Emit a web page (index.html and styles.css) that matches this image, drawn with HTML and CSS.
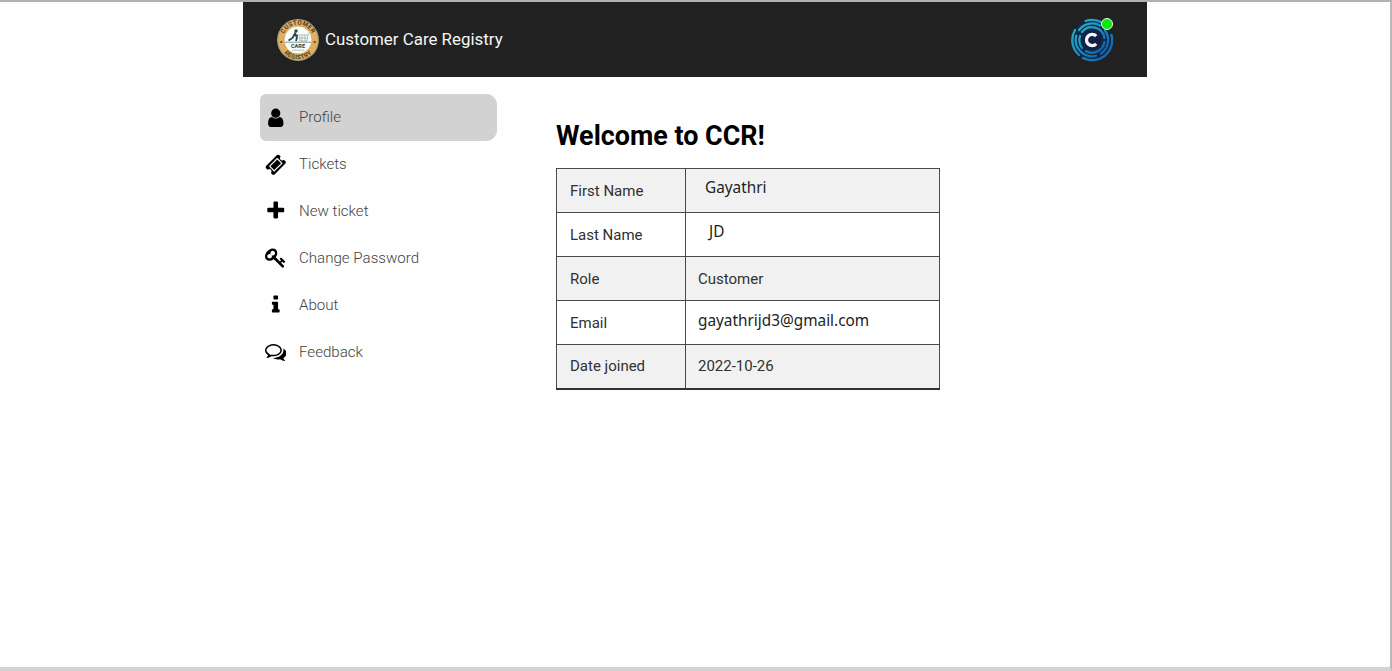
FILE: index.html
```html
<!DOCTYPE html>
<html lang="en">
<head>
<meta charset="utf-8">
<title>Customer Care Registry</title>
<link rel="stylesheet" href="styles.css">
</head>
<body>
<div class="app">
  <header class="topbar">
    <div class="brand">
      <svg class="logo" viewBox="0 0 42 42">
        <defs>
          <path id="arc-top" d="M5.6 21a15.4 15.4 0 0 1 30.8 0"/>
          <path id="arc-bottom" d="M1.7 21a19.3 19.3 0 0 0 38.6 0"/>
        </defs>
        <circle cx="21" cy="21" r="20.3" fill="#e3ae5c" stroke="#a9a184" stroke-width="1.2"/>
        <circle cx="21" cy="21" r="14" fill="#fbfcf8" stroke="#b69a60" stroke-width=".7"/>
        <text class="seal"><textPath href="#arc-top" startOffset="50%" text-anchor="middle">CUSTOMER</textPath></text>
        <text class="seal"><textPath href="#arc-bottom" startOffset="50%" text-anchor="middle">REGISTRY</textPath></text>
        <circle cx="4.3" cy="23" r="1.1" fill="#4b4024"/>
        <circle cx="37.7" cy="23" r="1.1" fill="#4b4024"/>
        <circle cx="19" cy="12" r="1.7" fill="#23474c"/>
        <path d="M18.5 13.5l-3 5.5M18 15l2 3.5-1 3.5M15.5 19l-4 2.5M17 15.5l4 1" fill="none" stroke="#23474c" stroke-width="1.8"/>
        <path d="M22 16h9l-1 6h-7zM25 16v6M28 16v6M31 16l1-2M22 19h8" fill="none" stroke="#9cb0a8" stroke-width=".8"/>
        <path d="M8 23.2h26" stroke="#55706d" stroke-width=".7"/>
        <text class="care" x="21" y="28.8" text-anchor="middle">CARE</text>
        <path d="M15 31.2h12" stroke="#a5b5af" stroke-width=".8"/>
      </svg>
      <span class="brand-name">Customer Care Registry</span>
    </div>
    <div class="avatar">
      <svg class="avatar-art" viewBox="0 0 44 44">
        <defs>
          <linearGradient id="ring" x1="0" y1="0" x2="1" y2="1">
            <stop offset="0" stop-color="#25b9c9"/>
            <stop offset="1" stop-color="#1558a8"/>
          </linearGradient>
        </defs>
        <circle cx="22" cy="22" r="20" fill="#10294b"/>
        <g fill="none" stroke="url(#ring)" stroke-linecap="round">
          <path d="M15.5 3A20 20 0 0 1 37 9M41.5 17A20 20 0 0 1 13 40M9 37A20 20 0 0 1 5 12" stroke-width="2.3"/>
          <path d="M9 12A16.3 16.3 0 0 1 30 7.5M35 12.5A16.3 16.3 0 0 1 31 35.6M26 37.7A16.3 16.3 0 0 1 6.3 17.5" stroke-width="2.2"/>
          <path d="M12 14A12.7 12.7 0 0 1 34.5 20M34.5 24A12.7 12.7 0 0 1 16 33.2M12 29.8A12.7 12.7 0 0 1 10 18" stroke-width="2.2"/>
        </g>
        <circle cx="22" cy="22" r="9.6" fill="#141f46"/>
        <path d="M26.2 18.2A5.6 5.6 0 1 0 26.2 25.8" fill="none" stroke="#f1f5fb" stroke-width="3.3"/>
      </svg>
      <span class="status"></span>
    </div>
  </header>
  <div class="body">
    <nav class="menu">
      <a class="item active"><svg class="icon" viewBox="0 0 1792 1792"><path d="M1536 1399q0 109-62.5 187t-150.5 78h-854q-88 0-150.5-78t-62.5-187q0-85 8.5-160.5t31.5-152 58.5-131 94-89 134.5-34.5q131 128 313 128t313-128q76 0 134.5 34.5t94 89 58.5 131 31.5 152 8.5 160.5zm-256-887q0 159-112.5 271.5t-271.5 112.5-271.5-112.5-112.5-271.5 112.5-271.5 271.5-112.5 271.5 112.5 112.5 271.5z"/></svg>Profile</a>
      <a class="item"><svg class="icon" viewBox="0 0 1792 1792"><path d="M1024 452l316 316-572 572-316-316zm-211 979l618-618q19-19 19-45t-19-45l-362-362q-18-18-45-18t-45 18l-618 618q-19 19-19 45t19 45l362 362q18 18 45 18t45-18zm889-637l-907 908q-37 37-90.5 37t-90.5-37l-126-126q56-56 56-136t-56-136-136-56-136 56l-125-126q-37-37-37-90.5t37-90.5l907-906q37-37 90.5-37t90.5 37l125 125q-56 56-56 136t56 136 136 56 136-56l126 125q37 37 37 90.5t-37 90.5z"/></svg>Tickets</a>
      <a class="item"><svg class="icon" viewBox="0 0 1792 1792"><path d="M1600 736v192q0 40-28 68t-68 28h-416v416q0 40-28 68t-68 28h-192q-40 0-68-28t-28-68v-416h-416q-40 0-68-28t-28-68v-192q0-40 28-68t68-28h416v-416q0-40 28-68t68-28h192q40 0 68 28t28 68v416h416q40 0 68 28t28 68z"/></svg>New ticket</a>
      <a class="item"><svg class="icon" viewBox="0 0 1792 1792"><path d="M832 512q0-80-56-136t-136-56-136 56-56 136q0 42 19 83-41-19-83-19-80 0-136 56t-56 136 56 136 136 56 136-56 56-136q0-42-19-83 41 19 83 19 80 0 136-56t56-136zm851 704q0 17-49 66t-66 49q-9 0-28.5-16t-36.5-33-38.5-40-24.5-26l-96 96 220 220q28 28 28 68 0 42-39 81t-81 39q-40 0-68-28l-671-671q-176 131-365 131-163 0-265.5-102.5t-102.5-265.5q0-160 95-313t248-248 313-95q163 0 265.5 102.5t102.5 265.5q0 189-131 365l355 355 96-96q-3-3-26-24.5t-40-38.5-33-36.5-16-28.5q0-17 49-66t66-49q13 0 23 10 6 6 46 44.5t82 79.5 86.5 86 73 78 28.5 41z"/></svg>Change Password</a>
      <a class="item"><svg class="icon" viewBox="0 0 1792 1792"><path d="M1216 1344v128q0 26-19 45t-45 19h-512q-26 0-45-19t-19-45v-128q0-26 19-45t45-19h64v-384h-64q-26 0-45-19t-19-45v-128q0-26 19-45t45-19h384q26 0 45 19t19 45v576h64q26 0 45 19t19 45zm-128-1152v192q0 26-19 45t-45 19h-256q-26 0-45-19t-19-45v-192q0-26 19-45t45-19h256q26 0 45 19t19 45z"/></svg>About</a>
      <a class="item"><svg class="icon" viewBox="0 0 1792 1792"><path d="M704 384q-153 0-286 52t-211.5 141-78.5 191q0 82 53 158t149 132l97 56-35 84q34-20 62-39l44-31 53 10q78 14 153 14 153 0 286-52t211.5-141 78.5-191-78.5-191-211.5-141-286-52zm0-128q191 0 353.5 68.5t256.5 186.5 94 257-94 257-256.5 186.5-353.5 68.5q-86 0-176-16-124 88-278 128-36 9-86 16h-3q-11 0-20.5-8t-11.5-21q-1-3-1-6.5t.5-6.5 2-6l2.5-5 3.5-5.5 4-5 4.5-5 4-4.5q5-6 23-25t26-29.5 22.5-29 25-38.5 20.5-44q-124-72-195-177t-71-224q0-139 94-257t256.5-186.5 353.5-68.5zm822 1169q10 24 20.5 44t25 38.5 22.5 29 26 29.5 23 25q1 1 4 4.5t4.5 5 4 5 3.5 5.5l2.5 5 2 6 .5 6.5-1 6.5q-3 14-13 22t-22 7q-50-7-86-16-154-40-278-128-90 16-176 16-271 0-472-132 58 4 88 4 161 0 309-45t264-129q125-92 192-212t67-254q0-77-23-152 129 71 204 178t75 230q0 120-71 224.5t-195 176.5z"/></svg>Feedback</a>
    </nav>
    <main class="profile">
      <h1 class="title">Welcome to CCR!</h1>
      <table class="details">
        <tr><td class="label">First Name</td><td class="edited first">Gayathri</td></tr>
        <tr><td class="label">Last Name</td><td class="edited last">JD</td></tr>
        <tr><td class="label">Role</td><td>Customer</td></tr>
        <tr><td class="label">Email</td><td class="edited email">gayathrijd3@gmail.com</td></tr>
        <tr><td class="label">Date joined</td><td>2022-10-26</td></tr>
      </table>
    </main>
  </div>
</div>
</body>
</html>
```
FILE: styles.css
```css
* { box-sizing: border-box; }
body {
  margin: 0;
  height: 671px;
  overflow: hidden;
  background: #fefefe;
  border-top: 2px solid #b0b0b0;
  border-right: 2px solid #b8b8b8;
  border-bottom: 4px solid #d2d2d2;
  font-family: Roboto, sans-serif;
}
.app { width: 904px; margin-left: 243px; }
.topbar {
  height: 75px;
  background: #212121;
  display: flex;
  align-items: center;
  justify-content: space-between;
  padding: 0 33px 0 34px;
}
.brand { display: flex; align-items: center; gap: 6px; }
.logo { width: 42px; height: 42px; }
.seal { font: bold 6.2px Roboto, sans-serif; fill: #4b4024; letter-spacing: .3px; }
.care { font: bold 5.6px Roboto, sans-serif; fill: #23474c; }
.brand-name { color: #f5f5f5; font-size: 16.9px; padding-bottom: 1px; }
.avatar { position: relative; width: 44px; height: 44px; }
.avatar-art { display: block; width: 44px; height: 44px; }
.status {
  position: absolute;
  right: 1px;
  top: 0;
  width: 12px;
  height: 12px;
  border-radius: 50%;
  background: #0be80b;
  border: 1px solid #e4ffe4;
}
.body { display: flex; padding: 17px 0 0 17px; }
.menu { width: 237px; }
.item {
  display: flex;
  align-items: center;
  gap: 13px;
  height: 46.9px;
  padding-left: 4.5px;
  border-radius: 6px 11px 11px 6px;
  color: #444;
  font-size: 15.1px;
  font-weight: 300;
}
.active { background: #d2d2d2; }
.icon { width: 21.5px; height: 21.5px; fill: #000; }
.profile { margin-left: 59px; padding-top: 26px; }
.title { margin: 0 0 16px; font-size: 26.9px; line-height: 32px; font-weight: 700; color: #000; white-space: nowrap; }
.details { width: 384px; table-layout: fixed; border-collapse: collapse; border-bottom: 2px solid #333; }
.details td {
  height: 44px;
  padding: 0 12px;
  border: 1px solid #4a4a4a;
  font-size: 15px;
  color: #303030;
}
.details .label { width: 129px; padding-left: 13px; }
.details tr:nth-child(odd) { background: #f1f1f1; }
.details tr:nth-child(even) { background: #fff; }
.details .edited { font-family: "Noto Sans", sans-serif; font-size: 15.35px; color: #222; padding-bottom: 8px; }
.details .first { padding-left: 19px; }
.details .last { padding-left: 23px; }
.details .email { padding-bottom: 5px; }
```
